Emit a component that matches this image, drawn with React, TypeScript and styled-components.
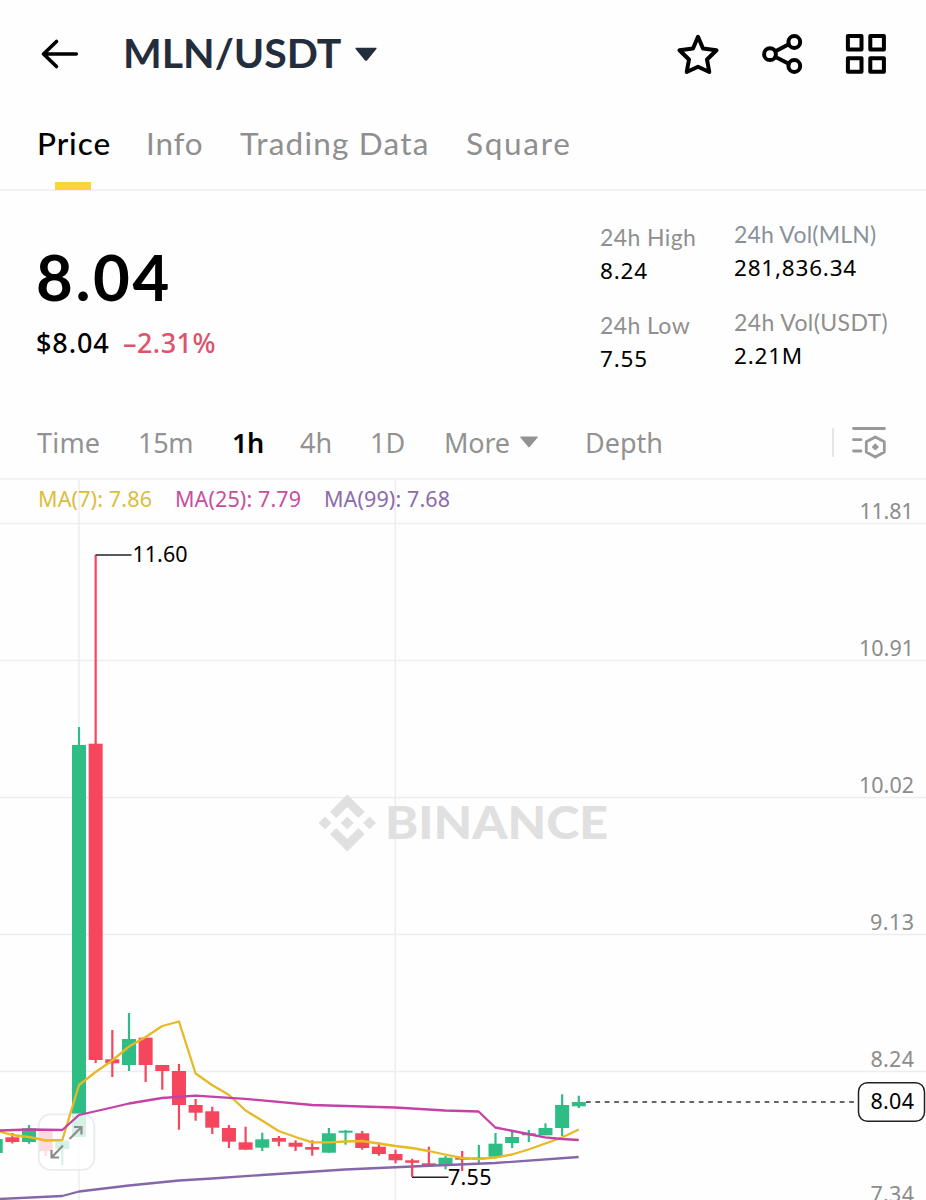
import React from "react";
import styled, { createGlobalStyle } from "styled-components";

const Global = createGlobalStyle`
  * { box-sizing: border-box; }
  html, body { margin: 0; padding: 0; background: #fefefe; }
  body { overflow: hidden; }
`;

const letters = `Lato, "Noto Sans", sans-serif`;
const figures = `"Noto Sans", "Open Sans", sans-serif`;

const Screen = styled.main`
  width: 926px;
  height: 1200px;
  display: flex;
  flex-direction: column;
  overflow: hidden;
  background: #fefefe;
  color: #000;
  font-family: ${letters};
  white-space: nowrap;
`;

const Header = styled.header`
  height: 108px;
  padding: 0 38px 0 40px;
  display: flex;
  align-items: center;
  flex: none;
`;

const BackIcon = styled.svg`
  width: 40px;
  height: 32px;
  margin-right: 43px;
  flex: none;
`;

const Pair = styled.h1`
  margin: 0 0 2px;
  width: 232px;
  font-size: 41px;
  line-height: 50px;
  font-weight: 700;
  letter-spacing: 0;
  color: #242d3c;
`;

const Actions = styled.div`
  margin-left: auto;
  display: flex;
  gap: 40px;
`;

const ActionIcon = styled.svg`
  width: 44px;
  height: 44px;
  fill: none;
  stroke: #000;
  stroke-width: 4;
  stroke-linejoin: round;
  stroke-linecap: round;
`;

const Tabs = styled.nav`
  height: 83px;
  padding-left: 37px;
  display: flex;
  flex: none;
  border-bottom: 2px solid #f2f2f2;
`;

const Tab = styled.a<{ $width: number; $active?: boolean; $track?: number }>`
  position: relative;
  width: ${(p) => p.$width}px;
  padding-top: 15px;
  font-size: 31.5px;
  line-height: 40px;
  font-weight: ${(p) => (p.$active ? 500 : 400)};
  letter-spacing: ${(p) => p.$track ?? 0}px;
  color: ${(p) => (p.$active ? "#000" : "#8f8f8f")};
`;

const TabMark = styled.span`
  position: absolute;
  left: 18px;
  bottom: -1px;
  width: 36px;
  height: 8px;
  background: #fbd43b;
`;

const Ticker = styled.section`
  height: 215px;
  display: flex;
  flex: none;
  padding-left: 36px;
`;

const Quote = styled.div`
  width: 564px;
  flex: none;
  padding-top: 48px;
`;

const LastPrice = styled.div`
  font-size: 63.5px;
  line-height: 76px;
  font-weight: 700;
  letter-spacing: 2.6px;
`;

const Change = styled.div`
  display: flex;
  margin-top: 10px;
  font-family: ${figures};
  font-size: 27px;
  line-height: 36px;
  font-weight: 500;
`;

const Fiat = styled.span`
  width: 87px;
  letter-spacing: 0.9px;
`;

const Percent = styled.span`
  color: #e0526b;
  letter-spacing: 0.45px;
`;

const StatColumn = styled.dl<{ $width: number; $top: number }>`
  margin: 0;
  width: ${(p) => p.$width}px;
  padding-top: ${(p) => p.$top}px;
  font-size: 23px;
  flex: none;
`;

const StatLabel = styled.dt<{ $track?: number; $cool?: boolean }>`
  line-height: 32px;
  letter-spacing: ${(p) => p.$track ?? 0}px;
  color: ${(p) => (p.$cool ? "#89919a" : "#8f8f8f")};
`;

const StatValue = styled.dd`
  margin: 2px 0 22px;
  font-family: ${figures};
  font-size: 22.5px;
  line-height: 32px;
  letter-spacing: 0.8px;
`;

const Intervals = styled.nav`
  height: 74px;
  padding-left: 37px;
  display: flex;
  align-items: center;
  flex: none;
  border-bottom: 2px solid #f3f3f3;
`;

const Interval = styled.a<{ $width: number; $active?: boolean; $track?: number }>`
  width: ${(p) => p.$width}px;
  padding-top: 1px;
  font-family: ${figures};
  font-size: 27px;
  line-height: 36px;
  font-weight: ${(p) => (p.$active ? 600 : 400)};
  letter-spacing: ${(p) => p.$track ?? 0}px;
  color: ${(p) => (p.$active ? "#000" : "#929292")};
`;

const MoreCaret = styled.svg`
  width: 18px;
  height: 12px;
  margin-right: 47px;
`;

const Divider = styled.span`
  width: 2px;
  height: 29px;
  margin-left: 168px;
  background: #e6e6e6;
`;

const SettingsIcon = styled.svg`
  width: 36px;
  height: 34px;
  margin: 2px 0 0 17px;
`;

const Chart = styled.svg`
  display: block;
  flex: none;
  width: 926px;
  height: 720px;
  font-family: ${figures};
  font-size: 21.5px;
`;

const GREEN = "#2ebd85";
const RED = "#f6465d";

type Candle = [up: 0 | 1, high: number, low: number, top: number, bottom: number];

const candles: Candle[] = [
  [1, 1139, 1153, 1139, 1153],
  [0, 1133, 1143.5, 1137.3, 1142],
  [1, 1125, 1143.7, 1128.3, 1142],
  [0, 1131, 1156, 1131, 1151],
  [1, 1140, 1165, 1140.5, 1149],
  [1, 727, 1137, 745, 1137],
  [0, 555, 1063, 743.7, 1060],
  [0, 1030, 1077, 1059.3, 1063.3],
  [1, 1013, 1071, 1039, 1065],
  [0, 1037.7, 1082, 1037.7, 1065],
  [0, 1065, 1089.7, 1065, 1071],
  [0, 1064, 1129.7, 1071, 1105],
  [0, 1099, 1120.7, 1105, 1112.7],
  [0, 1106.7, 1134, 1111.3, 1127.7],
  [0, 1125, 1148, 1128, 1141.7],
  [0, 1126.7, 1149.7, 1142.3, 1149.7],
  [1, 1132.7, 1151, 1139.3, 1147.7],
  [0, 1136, 1146.3, 1138, 1141.7],
  [0, 1140.3, 1151, 1142.7, 1146.7],
  [0, 1140.3, 1155.7, 1147, 1149.7],
  [1, 1128, 1152.7, 1133.3, 1152.7],
  [1, 1130, 1144.7, 1130.7, 1132.7],
  [0, 1131, 1149.7, 1133.3, 1148],
  [0, 1142.3, 1155.7, 1146.7, 1154],
  [0, 1149.7, 1163.3, 1154, 1160.3],
  [0, 1158.7, 1177, 1160.3, 1162.8],
  [0, 1146.7, 1165.7, 1163.3, 1165.7],
  [1, 1156, 1169.3, 1157.7, 1165],
  [0, 1151, 1171, 1157.7, 1159.7],
  [1, 1145, 1163, 1157.5, 1159.3],
  [1, 1133, 1157, 1143.7, 1156.7],
  [1, 1131, 1148, 1137, 1143],
  [1, 1130, 1142, 1133.3, 1135.3],
  [1, 1123.3, 1135.3, 1128, 1135.3],
  [1, 1094.3, 1136, 1105, 1128],
  [1, 1095.7, 1108, 1102, 1106.3],
];

const ma7 =
  "0,1131.5 12,1135 29,1137 45.7,1140.5 62.3,1140 79,1085 95.6,1072 112.3,1060.5 129,1046.5 145.7,1037 162.3,1026 179,1021.5 195.6,1073.5 212,1085 229,1095 245.6,1110.5 262,1120.5 278.6,1131 295.6,1137 312,1142.3 328.9,1142.3 345,1141.5 362,1141 378.7,1143.5 395.4,1146 412,1148 428.6,1151 445,1154.5 461.8,1158 478.6,1159 495.3,1157.5 512,1154.5 528.5,1149.5 545.3,1143.5 562,1137.5 578.7,1129.5";
const ma25 =
  "0,1130.5 29,1129.5 62.3,1130 79,1115 112,1107.5 129,1103.5 162,1098 195.6,1095.7 245,1098.8 312,1105 395,1107.5 445,1110.5 478.6,1111.5 495.3,1127.5 528,1134 545,1137.3 562,1139 578.7,1140";
const ma99 =
  "0,1199 62.3,1196 79,1191.5 129,1185.5 179,1180.5 212,1178.5 262,1175 345,1169.5 412,1166.5 495,1163 578.7,1157";

const gridRows = [523.5, 660.5, 797.5, 934.5, 1071.5];

const axis = [
  { text: "11.81", y: 519, x: 859.5, w: 54 },
  { text: "10.91", y: 656, x: 859, w: 55 },
  { text: "10.02", y: 793, x: 859, w: 55 },
  { text: "9.13", y: 930, x: 870, w: 44 },
  { text: "8.24", y: 1067, x: 870.5, w: 43.5 },
  { text: "7.34", y: 1202, x: 870.5, w: 43.5 },
];

const legend = [
  { text: "MA(7): 7.86", x: 38, w: 114, color: "#dcbc3c" },
  { text: "MA(25): 7.79", x: 175, w: 126, color: "#c74fa0" },
  { text: "MA(99): 7.68", x: 324, w: 126, color: "#8a6cab" },
];

function PriceChart() {
  return (
    <Chart viewBox="0 480 926 720">
      <g stroke="#ededed" strokeWidth={1.5}>
        {gridRows.map((y) => (
          <line key={y} x1={0} x2={926} y1={y} y2={y} />
        ))}
        <line x1={79} x2={79} y1={480} y2={1200} />
        <line x1={395.3} x2={395.3} y1={480} y2={1200} />
      </g>

      <g fill="#e0e0e0">
        <path d="M347.3 794.5l17.3 17.3-6.2 6.2-11.1-11.1-11.1 11.1-6.2-6.2z" />
        <path d="M347.3 851.5l17.3-17.3-6.2-6.2-11.1 11.1-11.1-11.1-6.2 6.2z" />
        <path d="M347.3 816.5l6.4 6.4-6.4 6.4-6.4-6.4z" />
        <path d="M325 816.5l6.4 6.4-6.4 6.4-6.4-6.4z" />
        <path d="M369.6 816.5l6.4 6.4-6.4 6.4-6.4-6.4z" />
        <text x={385} y={839} fontFamily={letters} fontSize={45} fontWeight={900} textLength={223} lengthAdjust="spacingAndGlyphs">
          BINANCE
        </text>
      </g>

      {candles.map(([up, high, low, top, bottom], i) => {
        const x = -4.3 + i * 16.66;
        return (
          <g key={i} fill={up ? GREEN : RED}>
            <rect x={x - 1.1} y={high} width={2.2} height={low - high} />
            <rect x={x - 7} y={top} width={14} height={bottom - top} />
          </g>
        );
      })}

      <rect x={38.7} y={1114.3} width={55.6} height={55.6} rx={12} fill="#fff" fillOpacity={0.8} stroke="#e9ecef" strokeWidth={1.8} />

      <g fill="none" strokeWidth={2.3} strokeLinejoin="round">
        <polyline points={ma99} stroke="#8566a8" />
        <polyline points={ma7} stroke="#e6b925" />
        <polyline points={ma25} stroke="#c541a6" />
      </g>

      <g fill="none" stroke="#8c8c8c" strokeWidth={2.2}>
        <path d="M69.5 1139L81.5 1127M74 1127H81.5V1134.5" />
        <path d="M63 1145.5L51.5 1157.5M51.5 1150V1157.5H59" />
      </g>

      <g fill="none" stroke="#222" strokeWidth={1.5}>
        <path d="M95.5 555H131.5" />
        <path d="M412 1177.3H448.5" />
        <path d="M412 1165V1177" stroke={RED} strokeWidth={2} />
        <path d="M586 1102H858" strokeDasharray="4.7 4.7" stroke="#333" />
        <rect x={858.5} y={1082.7} width={66} height={38.6} rx={9} fill="#fefefe" />
      </g>

      <g fill="#000">
        <text x={132.5} y={562} textLength={55}>11.60</text>
        <text x={448} y={1185} textLength={43.5}>7.55</text>
        <text x={870.5} y={1109} textLength={43.5}>8.04</text>
      </g>

      <g fill="#8c8c8c">
        {axis.map((a) => (
          <text key={a.text} x={a.x} y={a.y} textLength={a.w}>
            {a.text}
          </text>
        ))}
      </g>

      {legend.map((l) => (
        <text key={l.text} x={l.x} y={507} fill={l.color} textLength={l.w}>
          {l.text}
        </text>
      ))}
    </Chart>
  );
}

export default function App() {
  return (
    <Screen>
      <Global />
      <Header>
        <BackIcon viewBox="0 0 40 32" fill="none" stroke="#000" strokeWidth={3.6} strokeLinecap="round" strokeLinejoin="round">
          <path d="M36.3 16H3.5M16.5 3.5L3.5 16L16.5 28.5" />
        </BackIcon>
        <Pair>MLN/USDT</Pair>
        <svg width="22" height="15" viewBox="0 0 22 15">
          <path d="M1 .8h20c.6 0 .8.7.4 1.2L12 13.4c-.5.6-1.5.6-2 0L.6 2C.2 1.5.4.8 1 .8z" fill="#242d3c" />
        </svg>
        <Actions>
          <ActionIcon viewBox="676 32 44 44">
            <path d="M698 36.8L703 48.5L716.5 50.2L707 59.5L709.3 72L698 66.8L686.7 72L689 59.5L679.5 50.2L693 48.5Z" />
          </ActionIcon>
          <ActionIcon viewBox="760 32 44 44">
            <circle cx="770" cy="54.2" r="5.9" />
            <circle cx="794.3" cy="42" r="5.9" />
            <circle cx="794.3" cy="66" r="5.9" />
            <path d="M775.5 51.2L788.8 44.3M775.5 57L788.8 63.7" />
          </ActionIcon>
          <ActionIcon viewBox="844 32 44 44">
            <rect x="847.9" y="36" width="13.6" height="13.6" />
            <rect x="870.3" y="36" width="13.6" height="13.6" />
            <rect x="847.9" y="58.2" width="13.6" height="13.6" />
            <rect x="870.3" y="58.2" width="13.6" height="13.6" />
          </ActionIcon>
        </Actions>
      </Header>

      <Tabs>
        <Tab $width={109} $active $track={0.9}>
          Price
          <TabMark />
        </Tab>
        <Tab $width={94} $track={0.8}>Info</Tab>
        <Tab $width={226} $track={1.2}>Trading Data</Tab>
        <Tab $width={110} $track={1.7}>Square</Tab>
      </Tabs>

      <Ticker>
        <Quote>
          <LastPrice>8.04</LastPrice>
          <Change>
            <Fiat>$8.04</Fiat>
            <Percent>–2.31%</Percent>
          </Change>
        </Quote>
        <StatColumn $width={134} $top={30}>
          <StatLabel $track={0.4}>24h High</StatLabel>
          <StatValue>8.24</StatValue>
          <StatLabel $track={0.4}>24h Low</StatLabel>
          <StatValue>7.55</StatValue>
        </StatColumn>
        <StatColumn $width={160} $top={27}>
          <StatLabel $track={0.2} $cool>24h Vol(MLN)</StatLabel>
          <StatValue>281,836.34</StatValue>
          <StatLabel $track={0.4}>24h Vol(USDT)</StatLabel>
          <StatValue>2.21M</StatValue>
        </StatColumn>
      </Ticker>

      <Intervals>
        <Interval $width={101} $track={0.2}>Time</Interval>
        <Interval $width={94} $track={-0.3}>15m</Interval>
        <Interval $width={68} $active $track={-0.5}>1h</Interval>
        <Interval $width={70}>4h</Interval>
        <Interval $width={74}>1D</Interval>
        <Interval $width={76} $track={-0.2}>More</Interval>
        <MoreCaret viewBox="0 0 18 12">
          <path d="M.8.5h16.4c.6 0 .8.6.4 1L9.7 10.9c-.4.5-1 .5-1.4 0L.4 1.5C0 1.1.2.5.8.5z" fill="#929292" />
        </MoreCaret>
        <Interval $width={79}>Depth</Interval>
        <Divider />
        <SettingsIcon viewBox="0 0 36 34" fill="none" stroke="#999" strokeWidth={2.8} strokeLinecap="round" strokeLinejoin="round">
          <path d="M2.5 2.5H33.5M2.5 13.7H10M2.5 25H10M24.3 11L33.3 15.8V26L24.3 31L15.3 26V15.8Z" />
          <path d="M24.3 17.2L28 20.9L24.3 24.6L20.6 20.9Z" fill="#999" stroke="none" />
        </SettingsIcon>
      </Intervals>

      <PriceChart />
    </Screen>
  );
}
